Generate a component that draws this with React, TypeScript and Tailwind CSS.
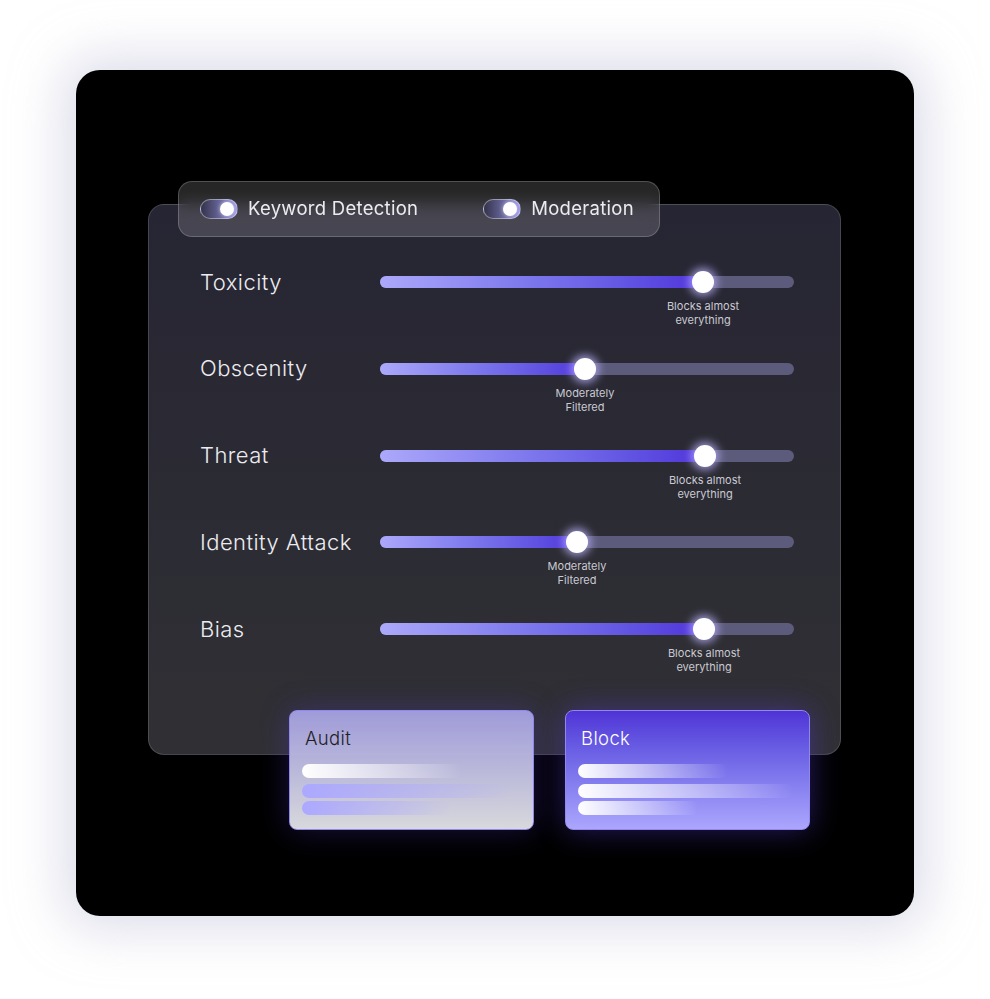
const rows = [
  { label: "Toxicity", pos: 323, caption: ["Blocks almost", "everything"] },
  { label: "Obscenity", pos: 205, caption: ["Moderately", "Filtered"] },
  { label: "Threat", pos: 325, caption: ["Blocks almost", "everything"] },
  { label: "Identity Attack", pos: 197, caption: ["Moderately", "Filtered"] },
  { label: "Bias", pos: 324, caption: ["Blocks almost", "everything"] },
]

function Toggle() {
  return (
    <div className="relative h-5 w-[38px] rounded-full border border-white/40 bg-gradient-to-r from-[#34334a] to-[#9b98ea]">
      <div className="absolute right-[3px] top-[2px] h-[14px] w-[14px] rounded-full bg-white shadow-[0_0_4px_rgba(255,255,255,0.6)]" />
    </div>
  )
}

function Slider({ pos, caption }: { pos: number; caption: string[] }) {
  return (
    <div className="relative h-3 w-[414px] rounded-full bg-[#5d5b7c]">
      <div
        className="absolute left-0 top-0 h-3 rounded-full bg-gradient-to-r from-[#aca8fa] to-[#4f2fd9]"
        style={{ width: pos + 6 }}
      />
      <div
        className="absolute top-[-5px] h-[22px] w-[22px] -translate-x-1/2 rounded-full bg-white shadow-[0_0_8px_3px_rgba(190,180,255,0.75)]"
        style={{ left: pos }}
      />
      <div
        className="absolute top-[23px] -translate-x-1/2 whitespace-nowrap text-center text-[11px] leading-[14px] text-[#cacad2]"
        style={{ left: pos }}
      >
        <div>{caption[0]}</div>
        <div>{caption[1]}</div>
      </div>
    </div>
  )
}

export default function App() {
  return (
    <div className="h-[999px] w-full bg-white pl-[76px] pt-[70px] font-['Inter',sans-serif]">
      <div className="h-[846px] w-[838px] rounded-[24px] bg-black pl-[72px] pt-[134px] shadow-[0_0_50px_14px_rgba(200,200,222,0.6)]">
        <div className="relative h-[551px] w-[693px] rounded-[16px] border border-white/15 bg-gradient-to-b from-[#262533] to-[#303034] pt-[65px]">
          {/* toggle bar */}
          <div className="absolute left-[29px] top-[-24px] flex h-[56px] w-[482px] items-center rounded-[14px] border border-white/20 bg-white/15 pl-[21px] backdrop-blur-sm">
            <Toggle />
            <span className="ml-[10px] text-[18.5px] font-normal tracking-[0.015em] text-[#ececf0]">Keyword Detection</span>
            <div className="ml-[65px]">
              <Toggle />
            </div>
            <span className="ml-[10px] text-[18.5px] font-normal tracking-[0.015em] text-[#ececf0]">Moderation</span>
          </div>

          {rows.map((r) => (
            <div key={r.label} className="h-[86.8px]">
              <div className="flex h-6 items-center pl-[51px]">
                <div className="w-[180px] text-[22px] font-light tracking-[0.02em] text-[#ececf0]">{r.label}</div>
                <Slider pos={r.pos} caption={r.caption} />
              </div>
            </div>
          ))}

          {/* action cards */}
          <div className="absolute left-[140px] top-[505px] flex gap-[31px]">
            <div className="h-[120px] w-[245px] rounded-[8px] border border-[#8f88ee] bg-gradient-to-b from-[#a5a0e1]/95 to-[#d8d8dc] px-3 pt-[15px] shadow-[0_0_30px_rgba(90,60,220,0.3)]">
              <div className="pl-[3px] text-[18.5px] font-light leading-6 tracking-[0.02em] text-[#1e1e26]">Audit</div>
              <div className="mt-[14px] h-[14px] w-[160px] rounded-full bg-gradient-to-r from-white to-white/0" />
              <div className="mt-[6px] h-[14px] w-[210px] rounded-full bg-gradient-to-r from-[#aca8ff] to-[#aca8ff]/0" />
              <div className="mt-[3px] h-[14px] w-[150px] rounded-full bg-gradient-to-r from-[#aca8ff] to-[#aca8ff]/0" />
            </div>
            <div className="h-[120px] w-[245px] rounded-[8px] border border-[#8f88ee] bg-gradient-to-b from-[#5032d6] to-[#aca6fd] px-3 pt-[15px] shadow-[0_0_30px_rgba(90,60,220,0.45)]">
              <div className="pl-[3px] text-[18.5px] font-light leading-6 tracking-[0.02em] text-white">Block</div>
              <div className="mt-[14px] h-[14px] w-[150px] rounded-full bg-gradient-to-r from-white to-white/0" />
              <div className="mt-[6px] h-[14px] w-[215px] rounded-full bg-gradient-to-r from-white to-white/0" />
              <div className="mt-[3px] h-[14px] w-[120px] rounded-full bg-gradient-to-r from-white to-white/0" />
            </div>
          </div>
        </div>
      </div>
    </div>
  )
}
